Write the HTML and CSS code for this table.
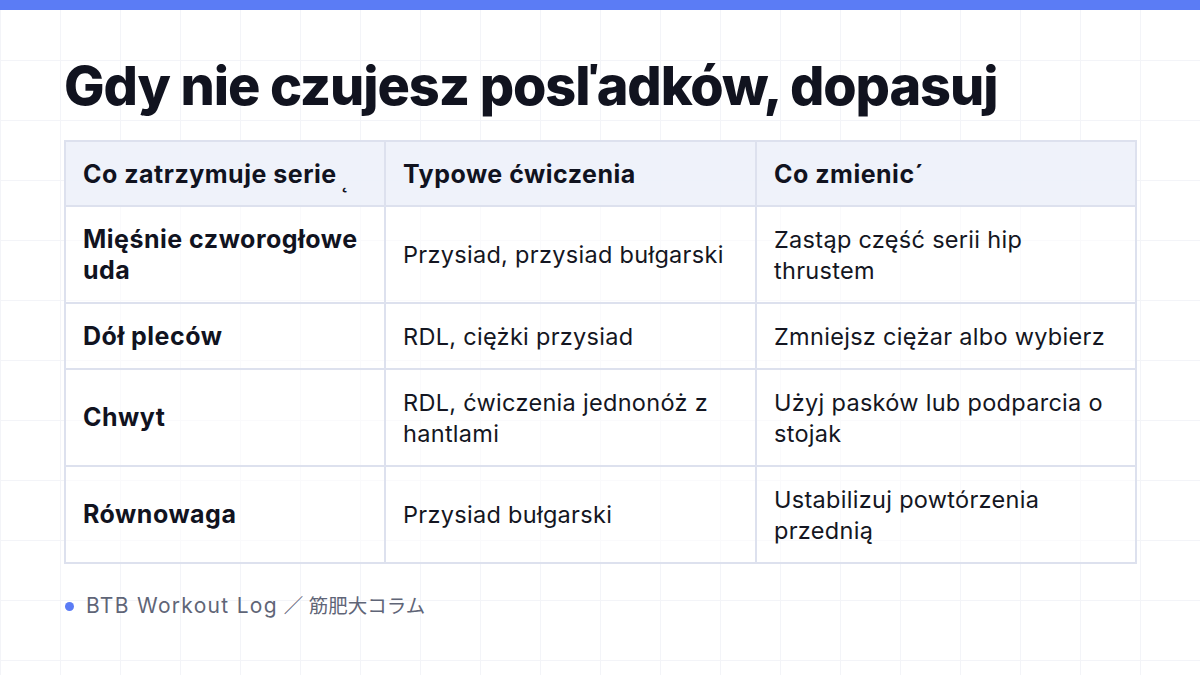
FILE: index.html
```html
<!DOCTYPE html>
<html lang="pl">
<head>
<meta charset="utf-8">
<title>Gdy nie czujesz pośladków</title>
<link rel="stylesheet" href="styles.css">
</head>
<body>
<div class="topbar"></div>
<main class="slide">
  <h1 class="title">Gdy nie czujesz posľadków, dopasuj</h1>
  <table class="grid-table">
    <colgroup>
      <col class="c1"><col class="c2"><col class="c3">
    </colgroup>
    <thead>
      <tr>
        <th>Co zatrzymuje serie<span class="mark-low">˛</span></th>
        <th>Typowe ćwiczenia</th>
        <th>Co zmienic<span class="mark-high">´</span></th>
      </tr>
    </thead>
    <tbody>
      <tr>
        <td class="label">Mięśnie czworogłowe uda</td>
        <td>Przysiad, przysiad bułgarski</td>
        <td>Zastąp część serii hip thrustem</td>
      </tr>
      <tr>
        <td class="label">Dół pleców</td>
        <td>RDL, ciężki przysiad</td>
        <td>Zmniejsz ciężar albo wybierz</td>
      </tr>
      <tr>
        <td class="label">Chwyt</td>
        <td>RDL, ćwiczenia jednonóż z hantlami</td>
        <td>Użyj pasków lub podparcia o stojak</td>
      </tr>
      <tr>
        <td class="label">Równowaga</td>
        <td>Przysiad bułgarski</td>
        <td>Ustabilizuj powtórzenia przednią</td>
      </tr>
    </tbody>
  </table>
  <footer class="source">
    <span class="dot"></span>
    <span class="source-text"><span class="source-latin">BTB Workout Log</span> <span class="source-cjk">／ 筋肥大コラム</span></span>
  </footer>
</main>
</body>
</html>
```

FILE: styles.css
```css
html, body {
  margin: 0;
  padding: 0;
}
body {
  width: 1200px;
  height: 675px;
  overflow: hidden;
  background-color: #ffffff;
  background-image:
    linear-gradient(to right, #f3f4f8 1px, transparent 1px),
    linear-gradient(to bottom, #f3f4f8 1px, transparent 1px);
  background-size: 60px 60px;
  font-family: "Inter", "Noto Sans CJK JP", sans-serif;
  color: #11131f;
}
.topbar {
  height: 10px;
  background: #5b7cf5;
}
.slide {
  padding: 43px 64px 0 64px;
}
.title {
  margin: 0 0 22px 0;
  font-size: 54px;
  line-height: 65px;
  font-weight: 800;
  letter-spacing: -1.1px;
  color: #11131f;
}
.grid-table {
  border-collapse: collapse;
  width: 1071px;
  table-layout: fixed;
}
.c1 { width: 320px; }
.c2 { width: 371px; }
.c3 { width: 380px; }
.grid-table th,
.grid-table td {
  border: 2px solid #dde1ee;
  padding: 16.5px 10px 16.5px 17px;
  text-align: left;
  vertical-align: middle;
  font-size: 23.5px;
  line-height: 31px;
  letter-spacing: 0.3px;
}
.grid-table th {
  background: rgba(238, 241, 250, 0.92);
  font-weight: 700;
  font-size: 25px;
  letter-spacing: 0.5px;
  line-height: 30px;
  padding-top: 16.5px;
  padding-bottom: 16.5px;
}
.grid-table td {
  background: rgba(255, 255, 255, 0.55);
  font-weight: 400;
  color: #141622;
}
.grid-table td.label {
  font-weight: 700;
  font-size: 25px;
  letter-spacing: 0.5px;
  padding-right: 20px;
  color: #11131f;
}
.mark-low {
  margin-left: 5px;
  font-weight: 400;
  font-size: 20px;
  line-height: 0;
  vertical-align: -5px;
}
.mark-high {
  font-weight: 700;
}
.source {
  display: flex;
  align-items: center;
  gap: 12px;
  margin-top: 28px;
  padding-left: 1px;
}
.dot {
  width: 9px;
  height: 9px;
  border-radius: 50%;
  background: #5b7cf5;
}
.source-text {
  font-size: 21px;
  line-height: 28px;
  color: #5f6577;
}
.source-latin {
  letter-spacing: 1.3px;
}
.source-cjk {
  font-size: 19.5px;
}
```
